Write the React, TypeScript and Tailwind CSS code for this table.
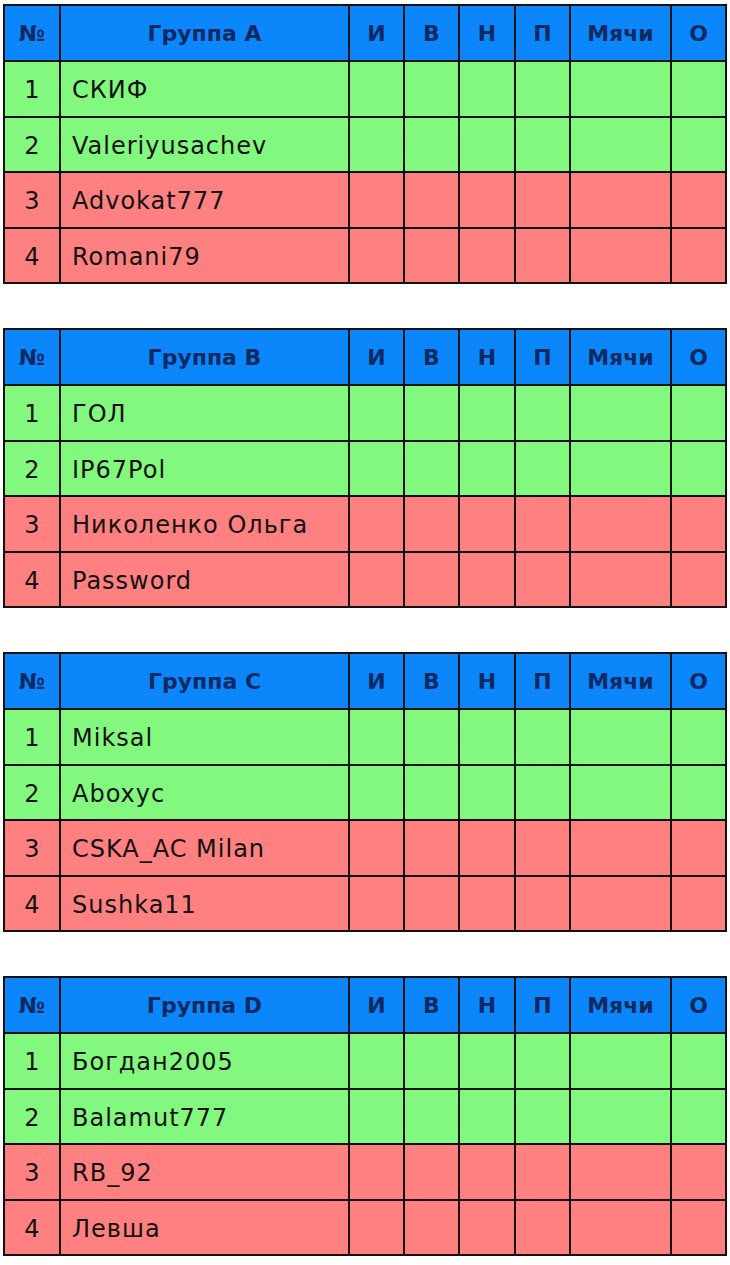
const groups = [
  { name: "Группа A", teams: ["СКИФ", "Valeriyusachev", "Advokat777", "Romani79"] },
  { name: "Группа B", teams: ["ГОЛ", "IP67Pol", "Николенко Ольга", "Password"] },
  { name: "Группа C", teams: ["Miksal", "Aboxyc", "CSKA_AC Milan", "Sushka11"] },
  { name: "Группа D", teams: ["Богдан2005", "Balamut777", "RB_92", "Левша"] },
];

const stats = ["И", "В", "Н", "П", "Мячи", "О"];
const rowHeights = ["h-[56px]", "h-[55px]", "h-[56px]", "h-[55px]"];

function GroupTable({ name, teams }: { name: string; teams: string[] }) {
  const th = "border-2 border-[#111] bg-[#0b86fb] text-[#0c2a62] font-bold text-[22px] text-center";
  const td = "border-2 border-[#111]";
  return (
    <table className="table-fixed border-collapse w-[722px] ml-[3px]">
      <colgroup>
        <col className="w-[56px]" />
        <col className="w-[289px]" />
        <col className="w-[55px]" />
        <col className="w-[55px]" />
        <col className="w-[56px]" />
        <col className="w-[55px]" />
        <col className="w-[101px]" />
        <col className="w-[55px]" />
      </colgroup>
      <thead>
        <tr className="h-[56px] font-['DejaVu_Sans',sans-serif]">
          <th className={th}>№</th>
          <th className={th}>{name}</th>
          {stats.map((s) => (
            <th key={s} className={th}>{s}</th>
          ))}
        </tr>
      </thead>
      <tbody className="font-['DejaVu_Sans',sans-serif] text-[24px] text-[#111]">
        {teams.map((t, i) => {
          const bg = i < 2 ? "bg-[#82f87e]" : "bg-[#ff8080]";
          return (
            <tr key={t} className={`${rowHeights[i]} ${bg}`}>
              <td className={`${td} text-center pt-[2px]`}>{i + 1}</td>
              <td className={`${td} pl-[11px] pt-[2px] tracking-[1px]`}>{t}</td>
              {stats.map((s) => (
                <td key={s} className={td} />
              ))}
            </tr>
          );
        })}
      </tbody>
    </table>
  );
}

export default function App() {
  return (
    <div className="w-[730px] min-h-[1265px] bg-white pt-[4px] flex flex-col gap-[44px]">
      {groups.map((g) => (
        <GroupTable key={g.name} name={g.name} teams={g.teams} />
      ))}
    </div>
  );
}
